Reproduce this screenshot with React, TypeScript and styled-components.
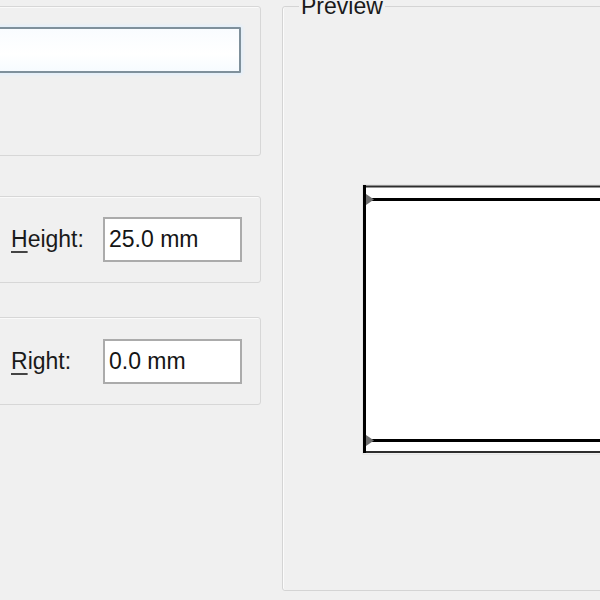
import React from "react";
import styled, { createGlobalStyle } from "styled-components";

const GlobalStyle = createGlobalStyle`
  html, body {
    margin: 0;
    padding: 0;
    background: #f0f0f0;
  }
  body {
    font-family: "Liberation Sans", Arial, sans-serif;
  }
`;

const Dialog = styled.div`
  width: 600px;
  height: 600px;
  overflow: hidden;
  display: flex;
  align-items: flex-start;
  background: #f0f0f0;
  color: #1c1c1c;
  font-size: 23px;
`;

const LeftColumn = styled.div`
  flex: none;
  width: 301px;
  margin-left: -40px;
  padding-top: 6px;
  display: flex;
  flex-direction: column;
`;

const GroupBox = styled.div<{ height: number; gapAfter: number }>`
  box-sizing: border-box;
  height: ${props => props.height}px;
  margin-bottom: ${props => props.gapAfter}px;
  border: 1px solid #d7d7d7;
  border-radius: 3px;
  box-shadow: inset 1px 1px 0 #fafafa;
  display: flex;
`;

const NameGroup = styled(GroupBox)`
  align-items: flex-start;
  padding: 20px 19px 0 0;
`;

const FieldGroup = styled(GroupBox)`
  align-items: center;
  padding: 0 19px 0 50px;
`;

const FocusedInput = styled.div`
  box-sizing: border-box;
  width: 100%;
  height: 46px;
  border: 2px solid #7f909b;
  border-radius: 1px;
  background: linear-gradient(#f9fcff, #ffffff 60%, #f6fbff);
  box-shadow: 0 0 3px 2px #e3effa;
`;

const Label = styled.label`
  width: 92px;
  flex: none;
  white-space: nowrap;
  color: #1a1a1a;

  u {
    text-decoration-color: #444;
    text-decoration-thickness: 2px;
    text-underline-offset: 4px;
  }
`;

const ValueBox = styled.div`
  box-sizing: border-box;
  width: 139px;
  height: 45px;
  flex: none;
  border: 2px solid #ababab;
  background: #fff;
  display: flex;
  align-items: center;
  padding-left: 4px;
  color: #151515;
  white-space: nowrap;
`;

const PreviewSet = styled.fieldset`
  flex: none;
  box-sizing: border-box;
  width: 360px;
  height: 597px;
  margin: -6px 0 0 21px;
  padding: 0;
  border: 1px solid #d4d4d4;
  border-radius: 3px;
  box-shadow: inset 1px 0 0 #fbfbfb;
  min-width: 0;
`;

const PreviewLegend = styled.legend`
  margin-left: 16px;
  padding: 0 2px;
  line-height: 24px;
  font-size: 23px;
  color: #1a1a1a;
`;

const PreviewCanvas = styled.div`
  padding: 166px 0 0 79px;
  display: flex;
`;

function LabelPreview() {
  return (
    <svg width="260" height="272" viewBox="0 0 260 272">
      <rect x="1" y="1" width="259" height="269" fill="#fff" stroke="#dcdcdc" strokeWidth="1" />
      <line x1="1" y1="2.5" x2="260" y2="2.5" stroke="#2e2e2e" strokeWidth="2" />
      <line x1="1" y1="15.5" x2="260" y2="15.5" stroke="#000" strokeWidth="3" />
      <line x1="1" y1="256.5" x2="260" y2="256.5" stroke="#000" strokeWidth="3" />
      <line x1="1" y1="268" x2="260" y2="268" stroke="#2e2e2e" strokeWidth="2" />
      <line x1="2.5" y1="1" x2="2.5" y2="269" stroke="#000" strokeWidth="3" />
      <polygon points="4,10 4,21 12,15.5" fill="#6f6f6f" />
      <polygon points="4,251 4,262 12,256.5" fill="#6f6f6f" />
    </svg>
  );
}

export default function App() {
  return (
    <>
      <GlobalStyle />
      <Dialog>
        <LeftColumn>
          <NameGroup height={150} gapAfter={40}>
            <FocusedInput />
          </NameGroup>
          <FieldGroup height={87} gapAfter={34}>
            <Label><u>H</u>eight:</Label>
            <ValueBox>25.0 mm</ValueBox>
          </FieldGroup>
          <FieldGroup height={88} gapAfter={0}>
            <Label><u>R</u>ight:</Label>
            <ValueBox>0.0 mm</ValueBox>
          </FieldGroup>
        </LeftColumn>
        <PreviewSet>
          <PreviewLegend>Preview</PreviewLegend>
          <PreviewCanvas>
            <LabelPreview />
          </PreviewCanvas>
        </PreviewSet>
      </Dialog>
    </>
  );
}
